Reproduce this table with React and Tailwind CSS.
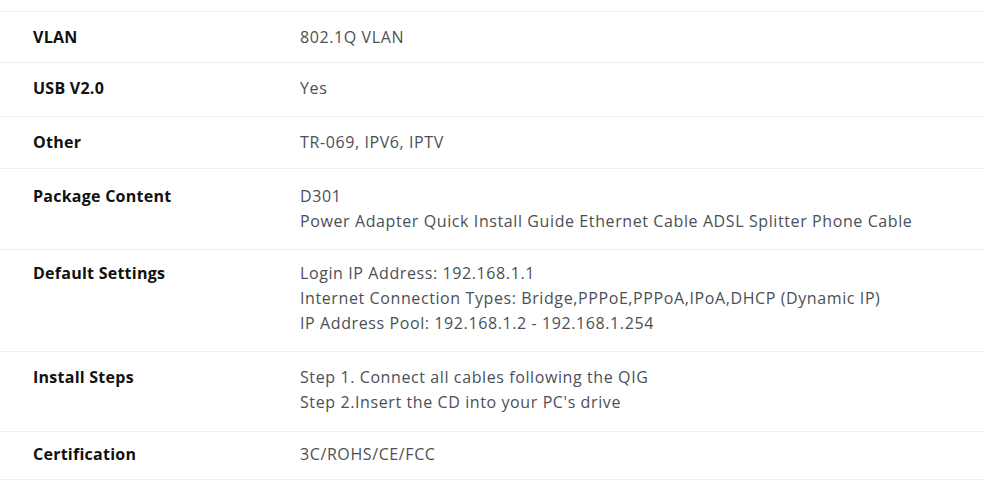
import React from "react";

const rows = [
  { label: "VLAN", lines: ["802.1Q VLAN"], h: "h-[51px]", pt: "pt-[13px]" },
  { label: "USB V2.0", lines: ["Yes"], h: "h-[54px]", pt: "pt-[13px]" },
  { label: "Other", lines: ["TR-069, IPV6, IPTV"], h: "h-[52px]", pt: "pt-[13px]" },
  {
    label: "Package Content",
    lines: [
      "D301",
      "Power Adapter Quick Install Guide Ethernet Cable ADSL Splitter Phone Cable",
    ],
    h: "h-[81px]",
    pt: "pt-[15px]",
  },
  {
    label: "Default Settings",
    lines: [
      "Login IP Address: 192.168.1.1",
      "Internet Connection Types: Bridge,PPPoE,PPPoA,IPoA,DHCP (Dynamic IP)",
      "IP Address Pool: 192.168.1.2 - 192.168.1.254",
    ],
    h: "h-[102px]",
    pt: "pt-[11px]",
  },
  {
    label: "Install Steps",
    lines: [
      "Step 1. Connect all cables following the QIG",
      "Step 2.Insert the CD into your PC's drive",
    ],
    h: "h-[80px]",
    pt: "pt-[13px]",
  },
  { label: "Certification", lines: ["3C/ROHS/CE/FCC"], h: "h-[48px]", pt: "pt-[10px]" },
];

export default function App() {
  return (
    <div
      className="w-[1000px] h-[484px] bg-white overflow-hidden pt-[11px]"
      style={{ fontFamily: '"Open Sans", "Noto Sans", sans-serif' }}
    >
      <div className="w-[985px] border-t border-[#efefef]">
        {rows.map((r) => (
          <div
            key={r.label}
            className={`flex border-b border-[#efefef] box-border ${r.h} ${r.pt}`}
          >
            <div className="w-[300px] shrink-0 pl-[33px] text-[16px] leading-[25px] font-bold tracking-[0.25px] text-[#111]">
              {r.label}
            </div>
            <div className="flex-1 text-[16px] leading-[25px] tracking-[0.6px] text-[#4b4f56]">
              {r.lines.map((l) => (
                <div key={l}>{l}</div>
              ))}
            </div>
          </div>
        ))}
      </div>
    </div>
  );
}
